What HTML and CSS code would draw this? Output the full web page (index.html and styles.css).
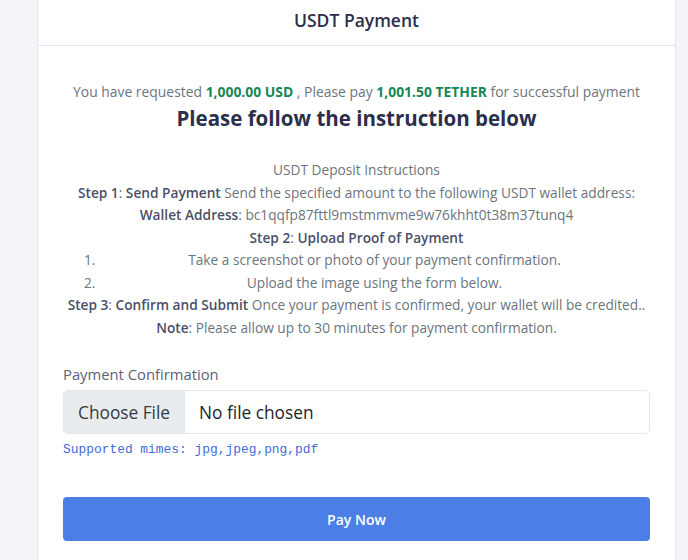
FILE: index.html
```html
<!DOCTYPE html>
<html>
<head>
<meta charset="utf-8">
<link rel="stylesheet" href="styles.css">
</head>
<body>
<div class="page">
  <div class="card">
    <div class="card-header">USDT Payment</div>
    <div class="card-body">
      <p class="request">You have requested <b class="green">1,000.00 USD</b> , Please pay <b class="green">1,001.50 TETHER</b> for successful payment</p>
      <h2 class="title">Please follow the instruction below</h2>
      <div class="instructions">
        <p>USDT Deposit Instructions</p>
        <p><b>Step 1</b>: <b>Send Payment</b> Send the specified amount to the following USDT wallet address:</p>
        <p><b>Wallet Address</b>: bc1qqfp87fttl9mstmmvme9w76khht0t38m37tunq4</p>
        <p><b>Step 2</b>: <b>Upload Proof of Payment</b></p>
        <ol>
          <li>Take a screenshot or photo of your payment confirmation.</li>
          <li>Upload the image using the form below.</li>
        </ol>
        <p><b>Step 3</b>: <b>Confirm and Submit</b> Once your payment is confirmed, your wallet will be credited..</p>
        <p><b>Note</b>: Please allow up to 30 minutes for payment confirmation.</p>
      </div>
      <div class="field">
        <label class="label">Payment Confirmation</label>
        <div class="file-input">
          <span class="file-btn">Choose File</span>
          <span class="file-name">No file chosen</span>
        </div>
        <code class="hint">Supported mimes: jpg,jpeg,png,pdf</code>
      </div>
      <button class="pay">Pay Now</button>
    </div>
  </div>
</div>
</body>
</html>
```

FILE: styles.css
```css
html, body {
  margin: 0;
  padding: 0;
  background: #f3f5f9;
  font-family: "Open Sans", "Noto Sans", sans-serif;
}
.page {
  padding: 0 12px 0 37px;
}
.card {
  background: #fff;
  border-left: 1px solid #e4e6ef;
  border-right: 1px solid #e4e6ef;
  min-height: 560px;
}
.card-header {
  height: 45px;
  border-bottom: 1px solid #e4e6ef;
  text-align: center;
  font-size: 17.5px;
  font-weight: 600;
  color: #2b2f4c;
  line-height: 40px;
}
.card-body {
  padding: 30px 25px 0 25px;
}
.request {
  margin: 0;
  text-align: center;
  font-size: 13.9px;
  line-height: 32px;
  color: #6c757d;
}
.green {
  color: #198754;
  font-weight: 700;
}
.title {
  margin: -5px 0 0 0;
  text-align: center;
  font-size: 20.5px;
  font-weight: 700;
  color: #2b2f4c;
  line-height: 30px;
}
.instructions {
  margin-top: 26px;
  text-align: center;
  font-size: 13.7px;
  line-height: 22.55px;
  color: #6c757d;
}
.instructions p {
  margin: 0;
}
.instructions b {
  color: #4a5068;
  font-weight: 600;
}
.instructions ol {
  margin: 0;
  padding-left: 36px;
}
.field {
  margin-top: 25px;
}
.label {
  display: block;
  font-size: 14.8px;
  color: #5e6278;
  line-height: 20px;
  margin-bottom: 6px;
}
.file-input {
  display: flex;
  height: 42px;
  border: 1px solid #e4e6ef;
  border-radius: 5px;
  overflow: hidden;
  font-size: 17.3px;
  color: #212529;
}
.file-btn {
  display: flex;
  align-items: center;
  padding: 0 14px;
  background: #e9ecef;
  border-right: 1px solid #e4e6ef;
  color: #343a40;
}
.file-name {
  display: flex;
  align-items: center;
  padding-left: 14px;
}
.hint {
  display: block;
  margin-top: 8px;
  font-family: "Liberation Mono", monospace;
  font-size: 12.9px;
  color: #3f6ad8;
  line-height: 16px;
}
.pay {
  display: block;
  width: 100%;
  height: 44px;
  margin-top: 39px;
  border: 0;
  border-radius: 4px;
  background: #4b7fe6;
  color: #fff;
  font-family: inherit;
  font-size: 14px;
  font-weight: 600;
}
```
